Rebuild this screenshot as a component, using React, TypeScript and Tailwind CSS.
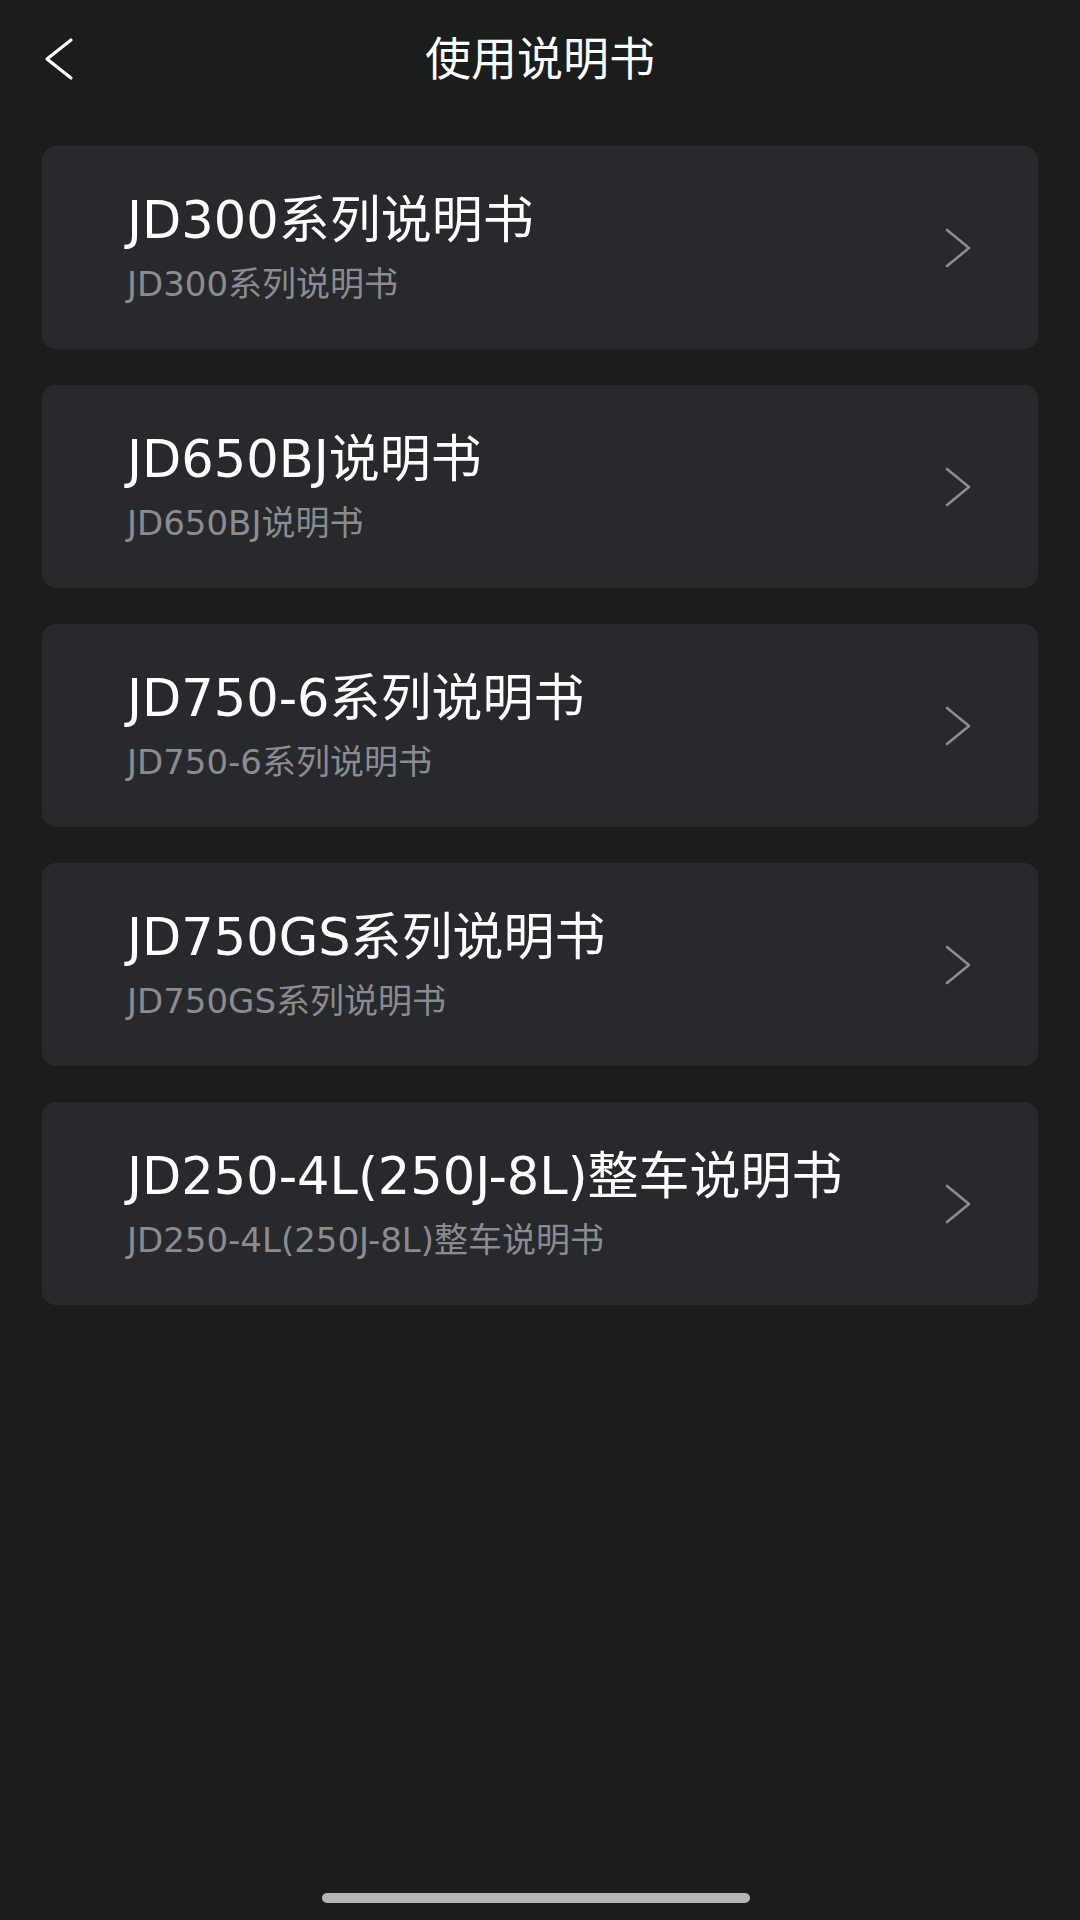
import React from 'react'

const manuals = [
  { title: 'JD300系列说明书', subtitle: 'JD300系列说明书' },
  { title: 'JD650BJ说明书', subtitle: 'JD650BJ说明书' },
  { title: 'JD750-6系列说明书', subtitle: 'JD750-6系列说明书' },
  { title: 'JD750GS系列说明书', subtitle: 'JD750GS系列说明书' },
  { title: 'JD250-4L(250J-8L)整车说明书', subtitle: 'JD250-4L(250J-8L)整车说明书' },
]

function BackIcon() {
  return (
    <svg width="34" height="44" viewBox="0 0 34 44" fill="none">
      <polyline
        points="29,3 5,22 29,41"
        stroke="#ffffff"
        strokeWidth="3.2"
        strokeLinecap="round"
        strokeLinejoin="round"
      />
    </svg>
  )
}

function ChevronRight() {
  return (
    <svg width="28" height="42" viewBox="0 0 28 42" fill="none">
      <polyline
        points="3,3 25,21 3,39"
        stroke="#8c8d90"
        strokeWidth="2.6"
        strokeLinecap="round"
        strokeLinejoin="round"
      />
    </svg>
  )
}

function ManualCard({ title, subtitle }: { title: string; subtitle: string }) {
  return (
    <div className="h-[203px] rounded-[14px] bg-[#28292d] pl-[85px] pr-[66px] flex items-center justify-between">
      <div className="flex flex-col gap-[13px]">
        <div className="text-[51px] leading-[60px] text-white">{title}</div>
        <div className="text-[34px] leading-[40px] text-[#8b8c90]">{subtitle}</div>
      </div>
      <ChevronRight />
    </div>
  )
}

export default function App() {
  return (
    <div
      className="w-[1080px] h-[1920px] bg-[#1b1c1c] flex flex-col"
      style={{ fontFamily: '"DejaVu Sans", "Noto Sans CJK SC", sans-serif' }}
    >
      <header className="h-[118px] grid grid-cols-[1fr_auto_1fr] items-center px-[42px]">
        <div className="flex items-center">
          <BackIcon />
        </div>
        <h1 className="text-[46px] leading-none text-white">使用说明书</h1>
        <div />
      </header>

      <div className="flex flex-col gap-[36px] px-[42px] pt-[28px]">
        {manuals.map((m) => (
          <ManualCard key={m.title} title={m.title} subtitle={m.subtitle} />
        ))}
      </div>

      <div className="mt-auto flex justify-center pb-[17px] pr-[8px]">
        <div className="w-[428px] h-[10px] rounded-full bg-[#b4b4b4]" />
      </div>
    </div>
  )
}
